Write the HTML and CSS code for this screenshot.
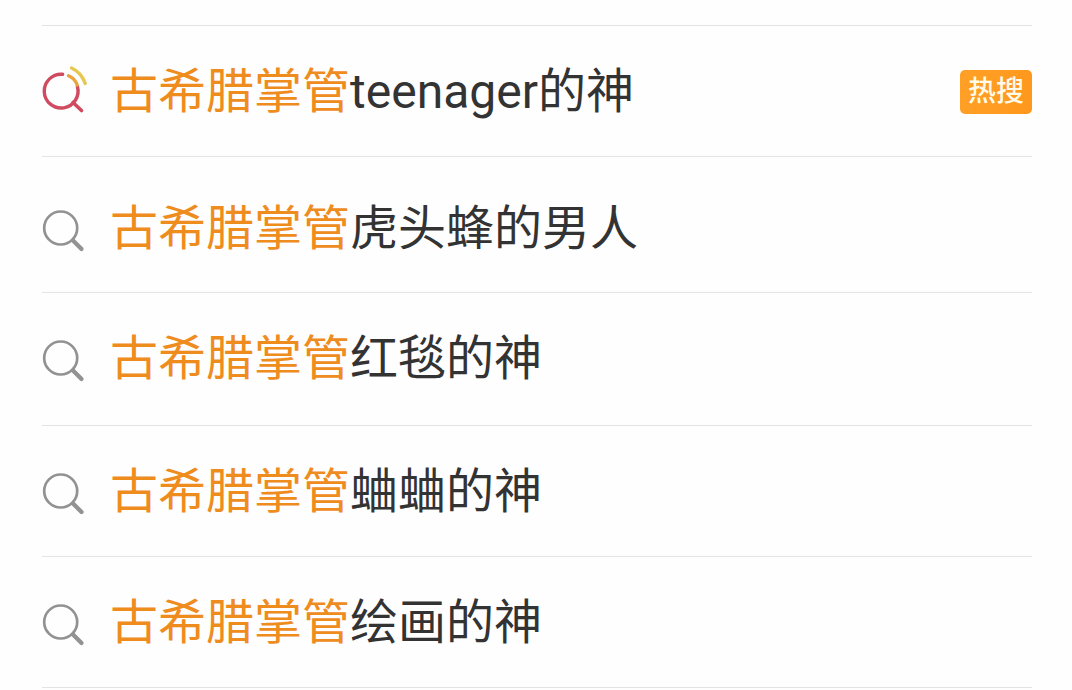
FILE: index.html
```html
<!DOCTYPE html>
<html lang="zh-CN">
<head>
<meta charset="utf-8">
<meta name="viewport" content="width=device-width, initial-scale=1">
<title>搜索建议</title>
<link rel="stylesheet" href="styles.css">
</head>
<body>
<svg class="sprite" aria-hidden="true">
  <symbol id="search" viewBox="0 0 48 48">
    <circle cx="18.700" cy="23" r="16.500" fill="none" stroke="#929292" stroke-width="2.700"/>
    <path d="M31 35.500L39.500 44" fill="none" stroke="#929292" stroke-width="4.200" stroke-linecap="round"/>
  </symbol>
</svg>
<ul class="suggestions">
  <li class="item">
    <a class="row" href="#teenager">
      <svg class="icon" viewBox="0 0 48 48" aria-hidden="true">
        <g fill="none" stroke-linecap="round">
          <path d="M20.600 6.300A16.900 16.900 0 1 0 35.400 18.500" stroke="#cf4c60" stroke-width="3.400"/>
          <path d="M31 34.500L39.500 42.500" stroke="#cf4c60" stroke-width="3.600"/>
          <path d="M26.500 7.800Q33 10.500 35.200 17" stroke="#e9a43c" stroke-width="3.400"/>
          <path d="M29.500 0Q39.500 4.500 43.200 15.500" stroke="#e6c84e" stroke-width="3.400"/>
        </g>
      </svg>
      <span class="text"><span class="match">古希腊掌管</span>teenager的神</span>
      <span class="badge">热搜</span>
    </a>
  </li>
  <li class="item">
    <a class="row row-tall" href="#hornet">
      <svg class="icon" aria-hidden="true"><use href="#search"/></svg>
      <span class="text"><span class="match">古希腊掌管</span>虎头蜂的男人</span>
    </a>
  </li>
  <li class="item">
    <a class="row row-medium" href="#carpet">
      <svg class="icon" aria-hidden="true"><use href="#search"/></svg>
      <span class="text"><span class="match">古希腊掌管</span>红毯的神</span>
    </a>
  </li>
  <li class="item">
    <a class="row" href="#ququ">
      <svg class="icon" aria-hidden="true"><use href="#search"/></svg>
      <span class="text"><span class="match">古希腊掌管</span>蛐蛐的神</span>
    </a>
  </li>
  <li class="item">
    <a class="row" href="#painting">
      <svg class="icon" aria-hidden="true"><use href="#search"/></svg>
      <span class="text"><span class="match">古希腊掌管</span>绘画的神</span>
    </a>
  </li>
</ul>
</body>
</html>
```
FILE: styles.css
```css
body {
  margin: 0;
  background: #fefefe;
  color: #333;
  font-family: Roboto, "Noto Sans CJK SC", sans-serif;
}

.sprite {
  display: block;
  width: 0;
  height: 0;
}

.suggestions {
  list-style: none;
  margin: 25px 40px 0 42px;
  padding: 0;
  border-top: 1px solid #e4e4e4;
}

.item {
  border-bottom: 1px solid #e4e4e4;
}

.row {
  display: flex;
  align-items: center;
  padding: 34px 0 32px;
  color: inherit;
  text-decoration: none;
}

.row-tall {
  padding: 40px 0 31px;
}

.row-medium {
  padding: 34px 0;
}

.icon {
  flex: none;
  width: 48px;
  height: 48px;
  margin-right: 20px;
  overflow: visible;
}

.text {
  flex: 1;
  font-size: 48px;
  line-height: 64px;
}

.match {
  color: #ee8c1e;
}

.badge {
  flex: none;
  padding: 0 8px;
  border-radius: 5px;
  background: linear-gradient(100deg, #ffa026, #ff981c);
  color: #fffbe8;
  font-size: 28px;
  font-weight: 500;
  line-height: 44px;
}
```
